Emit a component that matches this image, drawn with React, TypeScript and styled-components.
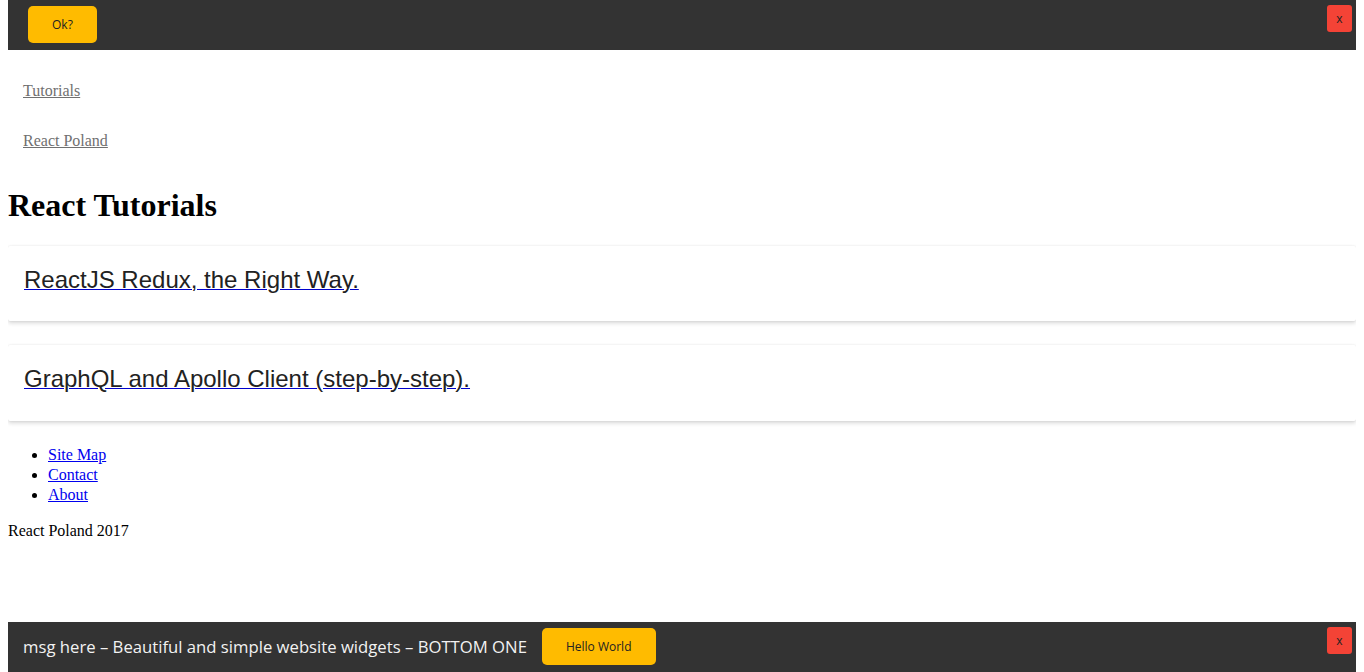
import React from "react";
import styled, { createGlobalStyle } from "styled-components";

const Global = createGlobalStyle`
  html, body { background: #fff; }
  body {
    margin: 0 8px;
    font-family: "Liberation Serif", "Times New Roman", serif;
    font-size: 16px;
    line-height: 20px;
    color: #000;
  }
`;

const TopBar = styled.div`
  height: 50px;
  background: #333333;
  display: flex;
  justify-content: space-between;
  align-items: flex-start;
  padding: 6px 4px 0 20px;
  box-sizing: border-box;
`;

const BottomBar = styled.div`
  position: fixed;
  left: 8px;
  right: 8px;
  bottom: 0;
  height: 50px;
  background: #333333;
  display: flex;
  align-items: flex-start;
  padding: 6px 4px 0 15px;
  box-sizing: border-box;
  gap: 15px;
`;

const Message = styled.span`
  font-family: "Open Sans", "Noto Sans", sans-serif;
  font-size: 16.7px;
  line-height: 37px;
  color: #f2f2f2;
  white-space: nowrap;
`;

const ActionButton = styled.button`
  height: 37px;
  padding: 0 24px;
  border: none;
  border-radius: 5px;
  background: #ffbb00;
  color: #222;
  font-family: "Open Sans", "Noto Sans", sans-serif;
  font-size: 12px;
  cursor: pointer;
`;

const CloseButton = styled.button<{ $push?: boolean }>`
  width: 25px;
  height: 27px;
  margin-top: -1px;
  margin-left: ${(p) => (p.$push ? "auto" : "0")};
  padding: 0;
  border: none;
  border-radius: 3px;
  background: #f44336;
  color: #222;
  font-family: "Open Sans", "Noto Sans", sans-serif;
  font-size: 12px;
  cursor: pointer;
`;

const Nav = styled.nav`
  display: flex;
  flex-direction: column;
  margin-top: 16px;
`;

const NavLink = styled.a`
  display: block;
  padding: 15px;
  color: #707070;
  text-decoration: underline;
`;

const Title = styled.h1`
  font-size: 32px;
  font-weight: bold;
  line-height: normal;
  margin: 21.44px 0;
`;

const Card = styled.div`
  background: #fff;
  border-radius: 2px;
  box-shadow: 0 2px 4px rgba(0, 0, 0, 0.16), 0 0 2px rgba(0, 0, 0, 0.08);
  padding: 20px 16px 28px;
  margin-bottom: 24px;
`;

const CardLink = styled.a`
  color: #0000cc;
  text-decoration: underline;
`;

const CardText = styled.span`
  font-family: "Liberation Sans", Arial, sans-serif;
  font-size: 24px;
  line-height: 27.6px;
  color: #222;
`;

const FooterList = styled.ul`
  margin: 16px 0;
  padding-left: 40px;
`;

const FooterLink = styled.a`
  color: #0000ee;
`;

const Copy = styled.p`
  margin: 16px 0;
`;

export default function App() {
  return (
    <>
      <Global />
      <TopBar>
        <ActionButton>Ok?</ActionButton>
        <CloseButton>x</CloseButton>
      </TopBar>
      <Nav>
        <NavLink href="#">Tutorials</NavLink>
        <NavLink href="#">React Poland</NavLink>
      </Nav>
      <Title>React Tutorials</Title>
      <Card>
        <CardLink href="#">
          <CardText>ReactJS Redux, the Right Way.</CardText>
        </CardLink>
      </Card>
      <Card>
        <CardLink href="#">
          <CardText>GraphQL and Apollo Client (step-by-step).</CardText>
        </CardLink>
      </Card>
      <FooterList>
        <li><FooterLink href="#">Site Map</FooterLink></li>
        <li><FooterLink href="#">Contact</FooterLink></li>
        <li><FooterLink href="#">About</FooterLink></li>
      </FooterList>
      <Copy>React Poland 2017</Copy>
      <BottomBar>
        <Message>msg here – Beautiful and simple website widgets – BOTTOM ONE</Message>
        <ActionButton>Hello World</ActionButton>
        <CloseButton $push>x</CloseButton>
      </BottomBar>
    </>
  );
}
